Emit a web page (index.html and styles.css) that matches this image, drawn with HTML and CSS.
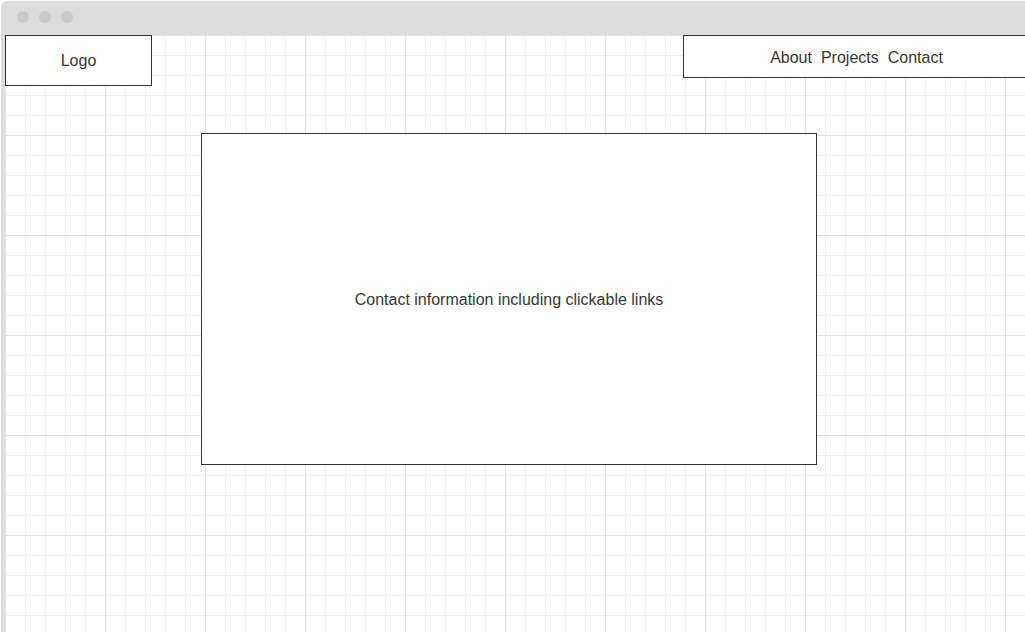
FILE: index.html
```html
<!DOCTYPE html>
<html lang="en">
<head>
<meta charset="utf-8">
<title>Wireframe</title>
<link rel="stylesheet" href="styles.css">
</head>
<body>
<div class="window">
  <div class="titlebar">
    <span class="dot"></span>
    <span class="dot"></span>
    <span class="dot"></span>
  </div>
  <div class="canvas">
    <header class="header">
      <div class="box logo">Logo</div>
      <nav class="box nav">
        <span>About</span>
        <span>Projects</span>
        <span>Contact</span>
      </nav>
    </header>
    <main class="box content">Contact information including clickable links</main>
  </div>
</div>
</body>
</html>
```
FILE: styles.css
```css
html, body {
  margin: 0;
  padding: 0;
  background: #ffffff;
  overflow: hidden;
  height: 100%;
}
body {
  font-family: "Liberation Sans", Arial, sans-serif;
  font-size: 16px;
  color: #383838;
}
.window {
  margin: 1px 0 0 1px;
  height: 631px;
  background: #dddddd;
  border-radius: 6px 0 0 0;
  display: flex;
  flex-direction: column;
}
.titlebar {
  height: 34px;
  flex: none;
  display: flex;
  align-items: center;
  gap: 10px;
  padding-left: 16px;
  box-sizing: border-box;
  padding-bottom: 2px;
}
.dot {
  width: 12px;
  height: 12px;
  border-radius: 50%;
  background: #c9c9c9;
}
.canvas {
  flex: 1;
  margin-left: 4px;
  background-color: #ffffff;
  background-image:
    linear-gradient(to right, #e2e2e2 1px, transparent 1px),
    linear-gradient(to bottom, #e2e2e2 1px, transparent 1px),
    linear-gradient(to right, #efefef 1px, transparent 1px),
    linear-gradient(to bottom, #efefef 1px, transparent 1px);
  background-size: 100px 100px, 100px 100px, 20px 20px, 20px 20px;
}
.header {
  display: flex;
  align-items: flex-start;
}
.box {
  box-sizing: border-box;
  border: 1px solid #333333;
  background: #ffffff;
  display: flex;
  align-items: center;
  justify-content: center;
}
.logo {
  width: 147px;
  height: 51px;
}
.nav {
  margin-left: auto;
  margin-right: -5px;
  width: 347px;
  height: 43px;
  gap: 9px;
  padding-top: 2px;
}
.content {
  margin: 47px 0 0 196px;
  width: 616px;
  height: 332px;
  padding-top: 2px;
}
```
